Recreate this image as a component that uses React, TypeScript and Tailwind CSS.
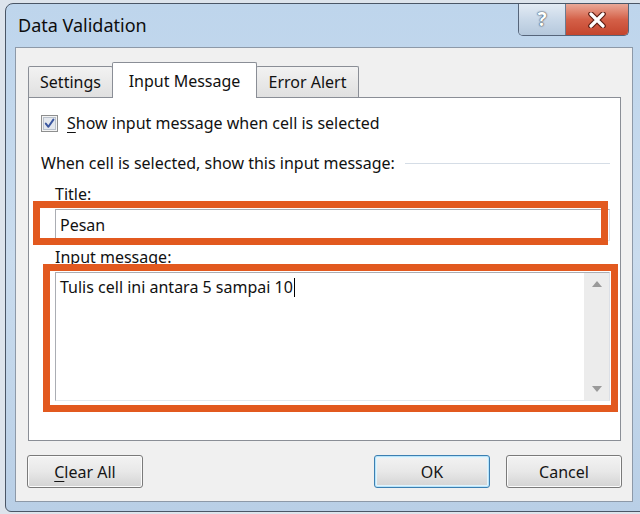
import React from "react";

const Underlined = ({ ch }: { ch: string }) => <span className="underline underline-offset-[3px] decoration-1">{ch}</span>;

function CheckBox() {
  return (
    <svg width="17" height="17" viewBox="0 0 17 17">
      <rect x="0.5" y="0.5" width="16" height="16" fill="#f4f4f4" stroke="#8e8f8f" />
      <rect x="2.5" y="2.5" width="12" height="12" fill="#e4e8ee" stroke="#b9c1cc" />
      <path d="M4.8 8.6 L7.4 11.8 L12.4 4.6" fill="none" stroke="#3b57a0" strokeWidth="2" strokeLinecap="round" strokeLinejoin="round" />
    </svg>
  );
}

function DlgButton({ children, primary }: { children: React.ReactNode; primary?: boolean }) {
  return (
    <button
      className={
        "h-[33px] w-[116px] rounded-[3px] border text-[16px] text-[#151515] bg-gradient-to-b from-[#f3f3f3] via-[#e8e8e8] to-[#d3d3d3] " +
        (primary
          ? "border-[#3c7fb1] shadow-[inset_0_0_0_1px_#b8e4fa,inset_0_0_0_2px_#e2f4fd]"
          : "border-[#7a7a7a] shadow-[inset_0_0_0_1px_#fbfbfb]")
      }
    >
      {children}
    </button>
  );
}

export default function App() {
  return (
    <div className="w-[640px] h-[514px] overflow-hidden bg-[#dde4ec] pt-[3px] pl-[5px] font-['Noto_Sans',sans-serif] text-[#111]">
      <div className="w-[642px] h-[509px] rounded-t-[8px] rounded-b-[6px] border border-[#4a5666] bg-gradient-to-b from-[#bed5ec] via-[#cadcee] to-[#b9cfe6] flex flex-col">
        {/* title bar */}
        <div className="h-[43px] flex items-start pl-[12px] pr-[17px]">
          <div className="pt-[9px] text-[18px] leading-[24px] text-[#0d0d0d]">Data Validation</div>
          <div className="ml-auto flex h-[32px] rounded-b-[5px] border border-t-0 border-[#56657a] overflow-hidden">
            <div className="w-[47px] flex items-center justify-center bg-gradient-to-b from-[#e3ebf4] via-[#c9d8e8] to-[#b5c8dc] border-r border-[#6b7b90]">
              <span className="text-[19px] font-bold text-white leading-none [text-shadow:0_0_1px_#2d3a4a,0_0_2px_#2d3a4a]">?</span>
            </div>
            <div className="w-[62px] flex items-center justify-center bg-gradient-to-b from-[#e9a897] via-[#d46048] to-[#c4452d]">
              <svg width="20" height="16" viewBox="0 0 20 16">
                <path d="M4 2 L16 14 M16 2 L4 14" stroke="#5a1a10" strokeWidth="5.5" strokeLinecap="round" />
                <path d="M4 2 L16 14 M16 2 L4 14" stroke="#ffffff" strokeWidth="3.2" strokeLinecap="round" />
              </svg>
            </div>
          </div>
        </div>

        {/* client area */}
        <div className="ml-[9px] w-[618px] h-[455px] border border-[#8d99a8] bg-[#f0f0f0] flex flex-col pt-[13px]">
          {/* tabs */}
          <div className="flex items-end pl-[12px] h-[36px]">
            <div className="h-[31px] w-[85px] border border-b-0 border-[#8a8e96] bg-gradient-to-b from-[#f2f2f2] to-[#e0e0e0] flex items-center justify-center text-[16px] rounded-t-[2px]">
              Settings
            </div>
            <div className="h-[36px] w-[145px] -ml-px border border-b-0 border-[#8a8e96] bg-white flex items-center justify-center text-[16px] relative z-10 -mb-px rounded-t-[2px]">
              Input Message
            </div>
            <div className="h-[31px] w-[103px] -ml-px border border-b-0 border-[#8a8e96] bg-gradient-to-b from-[#f2f2f2] to-[#e0e0e0] flex items-center justify-center text-[16px] rounded-t-[2px]">
              Error Alert
            </div>
          </div>

          {/* panel */}
          <div className="relative ml-[12px] w-[593px] h-[344px] border border-[#8a8e96] bg-white pt-[15px] pl-[12px] pr-[10px] flex flex-col text-[16px] leading-[20px]">
            <div className="h-[20px] flex items-center gap-[9px]">
              <CheckBox />
              <span>
                <Underlined ch="S" />how input message when cell is selected
              </span>
            </div>
            <div className="mt-[20px] h-[20px] flex items-center">
              <span>When cell is selected, show this input message:</span>
              <div className="flex-1 h-px bg-[#d5dde6] ml-[10px]" />
            </div>
            <div className="mt-[11px] h-[20px] pl-[14px]">Title:</div>
            <div className="mt-[5px] ml-[14px] h-[32px] border border-[#abadb3] border-r-[#dbdfe6] border-b-[#e3e9ef] flex items-center pl-[4px]">
              Pesan
            </div>
            <div className="mt-[6px] h-[20px] pl-[14px]">Input message:</div>
            <div className="mt-[5px] ml-[14px] h-[129px] border border-[#abadb3] border-r-[#dbdfe6] border-b-[#e3e9ef] flex">
              <div className="flex-1 pl-[4px] pt-[4px] flex items-start">
                <span>Tulis cell ini antara 5 sampai 10</span>
                <span className="ml-px mt-[1px] w-px h-[19px] bg-black" />
              </div>
              <div className="w-[25px] bg-[#ececec] flex flex-col items-center justify-between py-[8px]">
                <svg width="10" height="6" viewBox="0 0 10 6"><path d="M0 6 L5 0 L10 6 Z" fill="#9a9a9a" /></svg>
                <svg width="10" height="6" viewBox="0 0 10 6"><path d="M0 0 L5 6 L10 0 Z" fill="#9a9a9a" /></svg>
              </div>
            </div>

            {/* annotation boxes */}
            <div className="absolute left-[4px] top-[103px] w-[575px] h-[44px] border-[7px] border-[#e2591f]" />
            <div className="absolute left-[14px] top-[166px] w-[575px] h-[148px] border-[7px] border-[#e2591f]" />
          </div>

          {/* buttons */}
          <div className="mt-[14px] flex items-center pl-[11px] pr-[10px]">
            <DlgButton>
              <Underlined ch="C" />lear All
            </DlgButton>
            <div className="ml-auto flex gap-[16px]">
              <DlgButton primary>OK</DlgButton>
              <DlgButton>Cancel</DlgButton>
            </div>
          </div>
        </div>
      </div>
    </div>
  );
}
